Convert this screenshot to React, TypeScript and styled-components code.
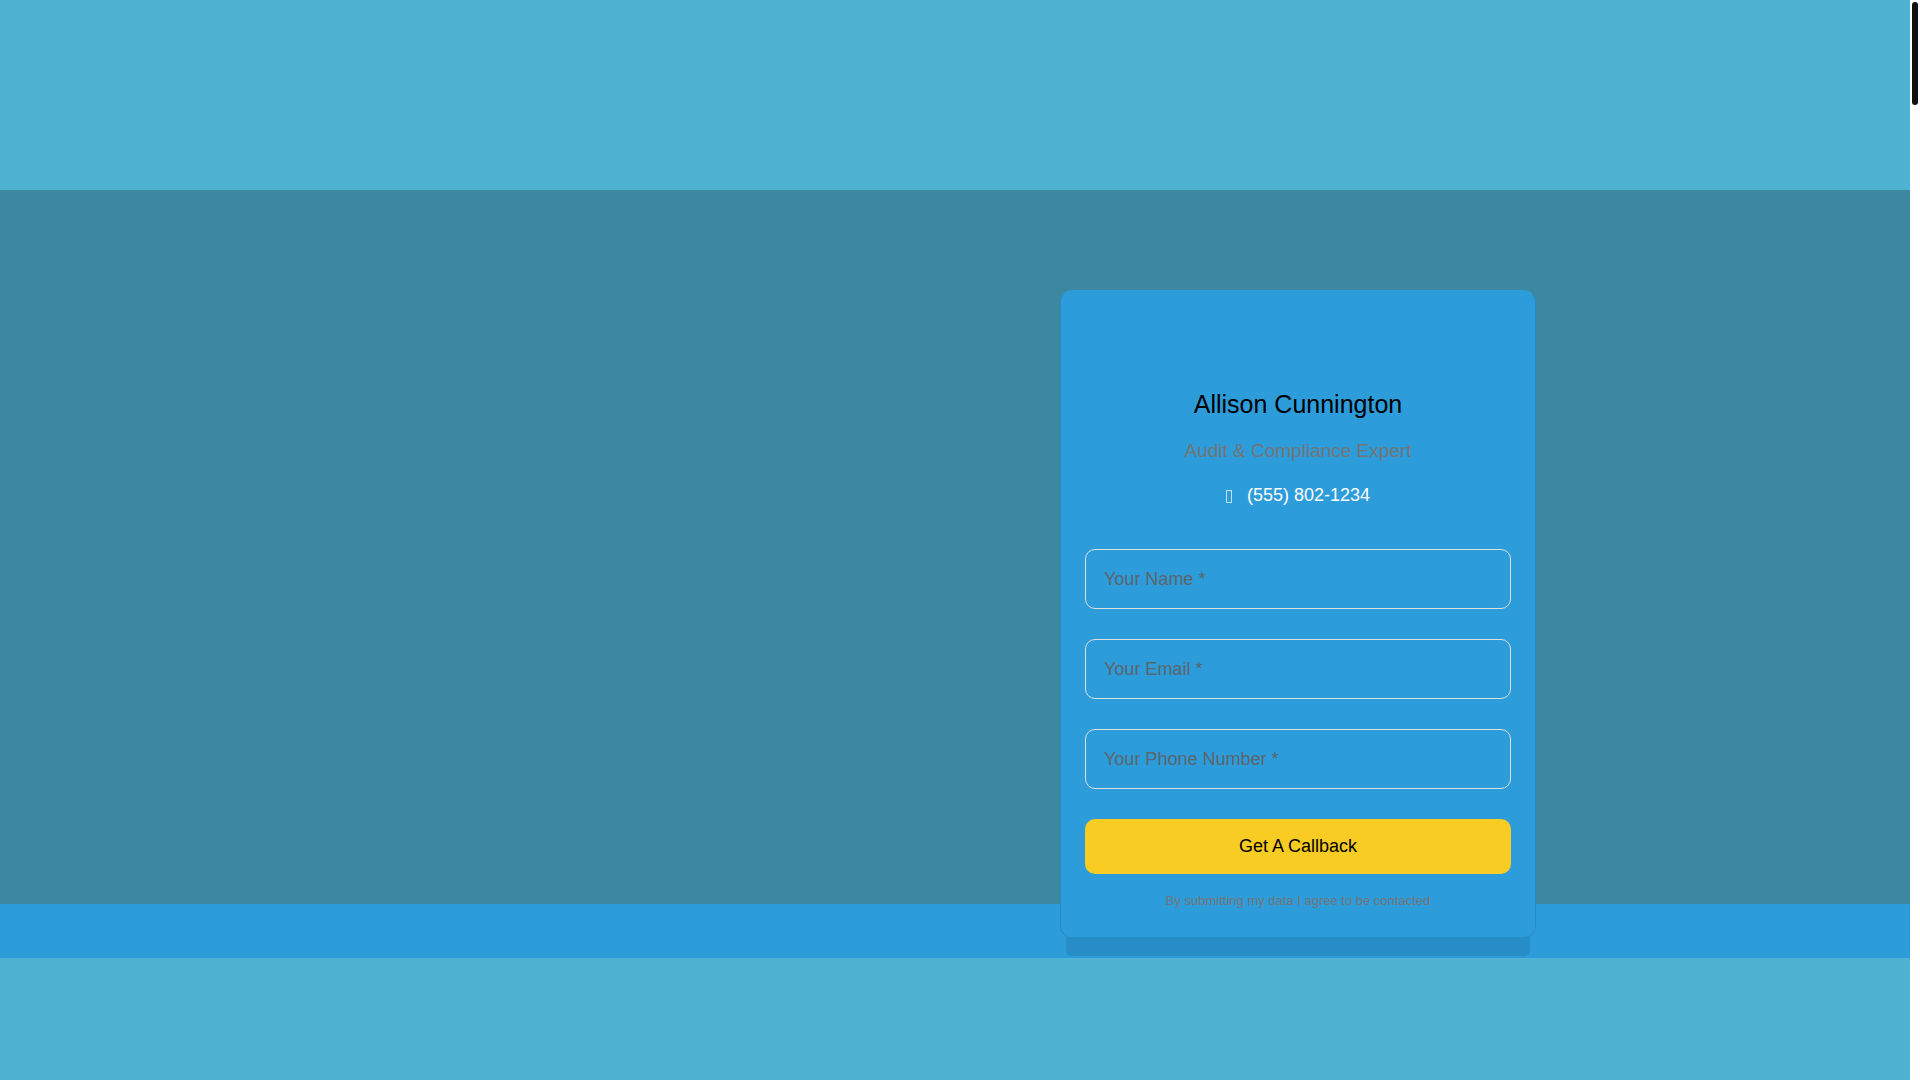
import React from "react";
import styled, { createGlobalStyle } from "styled-components";

const colors = {
  sky: "#4fb2d3",
  teal: "#3d88a0",
  blue: "#2d9cdb",
  shade: "#278dc6",
  yellow: "#f8cc23",
  muted: "#757575",
  placeholder: "#5c656b",
  line: "#dedede",
  edge: "rgba(0, 0, 0, 0.1)",
};

const GlobalStyle = createGlobalStyle`
  * {
    box-sizing: border-box;
  }
  body {
    margin: 0;
    font-family: "Liberation Sans", Arial, sans-serif;
    background: #ffffff;
  }
`;

const Page = styled.div`
  display: flex;
  min-height: 100vh;
`;

const Content = styled.main`
  flex: 1;
  min-width: 0;
  padding-top: 190px;
  background: ${colors.sky};
`;

const ScrollTrack = styled.div`
  flex: 0 0 10px;
  padding: 2px;
  background: #ffffff;
`;

const ScrollThumb = styled.div`
  height: 103px;
  border-radius: 3px;
  background: #111111;
`;

const Hero = styled.section`
  padding: 100px 24px 0;
  background: ${colors.teal};
`;

const Container = styled.div`
  display: flex;
  justify-content: flex-end;
  max-width: 1162px;
  margin: 0 auto;
`;

const Strip = styled.div`
  height: 54px;
  background: ${colors.blue};
`;

const Card = styled.div`
  position: relative;
  z-index: 1;
  width: 476px;
  max-width: 100%;
  margin-bottom: -34px;
  padding: 24px;
  border: 1px solid ${colors.edge};
  border-top-color: transparent;
  border-radius: 12px;
  background: ${colors.blue};
  text-align: center;

  &::after {
    content: "";
    position: absolute;
    top: 100%;
    left: 5px;
    right: 5px;
    height: 19px;
    border-radius: 0 0 6px 6px;
    background: ${colors.shade};
  }
`;

const Portrait = styled.div`
  height: 56px;
  margin-bottom: 17px;
`;

const Name = styled.h2`
  margin: 0 0 17px;
  font-size: 25px;
  font-weight: 400;
  line-height: 32px;
  color: #000000;
`;

const Role = styled.p`
  margin: 0 0 18px;
  font-size: 19px;
  line-height: 28px;
  color: ${colors.muted};
`;

const PhoneLink = styled.a`
  display: inline-flex;
  align-items: center;
  gap: 15px;
  font-size: 18px;
  line-height: 24px;
  color: #ffffff;
  text-decoration: none;
`;

const PhoneMark = styled.span`
  width: 6px;
  height: 13px;
  margin-top: 2px;
  border: 1px solid rgba(255, 255, 255, 0.7);
`;

const Form = styled.form`
  display: flex;
  flex-direction: column;
  gap: 30px;
  margin-top: 42px;
`;

const Field = styled.input`
  width: 100%;
  height: 60px;
  padding: 0 18px;
  border: 1px solid ${colors.line};
  border-radius: 10px;
  background: transparent;
  font: inherit;
  font-size: 18px;
  color: #000000;

  &::placeholder {
    color: ${colors.placeholder};
    opacity: 1;
  }
`;

const Submit = styled.button`
  height: 55px;
  border: 0;
  border-radius: 10px;
  background: ${colors.yellow};
  font: inherit;
  font-size: 18px;
  color: #000000;
  cursor: pointer;
`;

const Disclaimer = styled.p`
  margin: 17px 0 2px;
  font-size: 13px;
  line-height: 20px;
  color: ${colors.muted};
`;

const fields = [
  { name: "name", type: "text", label: "Your Name *" },
  { name: "email", type: "email", label: "Your Email *" },
  { name: "phone", type: "tel", label: "Your Phone Number *" },
];

export default function App() {
  return (
    <>
      <GlobalStyle />
      <Page>
        <Content>
          <Hero>
            <Container>
              <Card>
                <Portrait />
                <Name>Allison Cunnington</Name>
                <Role>Audit &amp; Compliance Expert</Role>
                <PhoneLink href="tel:+15558021234">
                  <PhoneMark aria-hidden="true" />
                  (555) 802-1234
                </PhoneLink>
                <Form onSubmit={(event) => event.preventDefault()}>
                  {fields.map((field) => (
                    <Field
                      key={field.name}
                      name={field.name}
                      type={field.type}
                      placeholder={field.label}
                      aria-label={field.label}
                      required
                    />
                  ))}
                  <Submit type="submit">Get A Callback</Submit>
                </Form>
                <Disclaimer>By submitting my data I agree to be contacted</Disclaimer>
              </Card>
            </Container>
          </Hero>
          <Strip />
        </Content>
        <ScrollTrack aria-hidden="true">
          <ScrollThumb />
        </ScrollTrack>
      </Page>
    </>
  );
}
